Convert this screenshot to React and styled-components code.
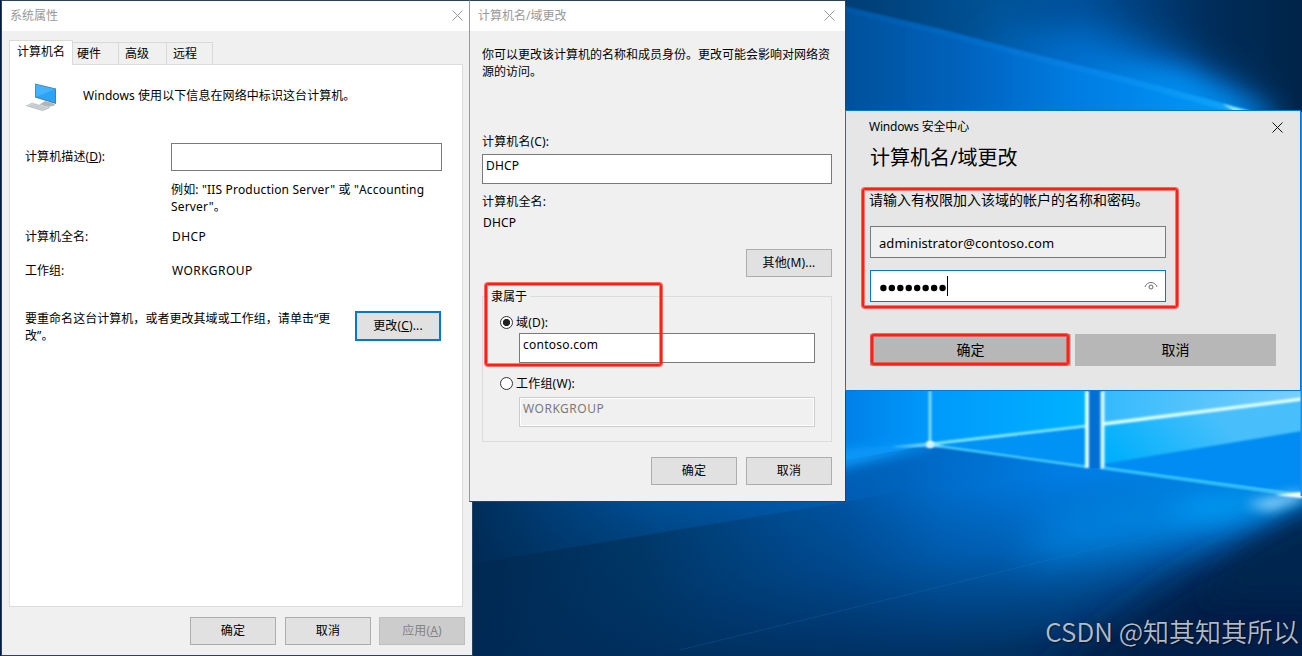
import React, { useState } from 'react';
import styled, { createGlobalStyle } from 'styled-components';

const GlobalStyle = createGlobalStyle`
  body {
    margin: 0;
    overflow: hidden;
  }
  * {
    box-sizing: border-box;
  }
`;

let Desktop = styled.div`
  position: relative;
  width: 1302px;
  height: 656px;
  overflow: hidden;
  background: #00264f;
  font-family: 'Noto Sans', 'Noto Sans CJK SC', sans-serif;
  font-size: 12px;
  line-height: 17px;
  color: #000;
  white-space: nowrap;
`;

let WallpaperSvg = styled.svg`
  display: block;
`;

// windows

let Window = styled.section`
  position: absolute;
  top: 0;
  left: ${props => props.$x}px;
  width: ${props => props.$w}px;
  height: ${props => props.$h}px;
  display: flex;
  flex-direction: column;
  background: #f0f0f0;
  border: 1px solid #2b4160;
  border-left-color: ${props => props.$edge || '#2b4160'};
`;

let TitleBar = styled.header`
  display: flex;
  align-items: center;
  justify-content: space-between;
  height: 30px;
  flex: none;
  padding: 0 ${props => props.$right}px 1px 8px;
  background: #fff;
  color: #999;
`;

let Button = styled.button`
  width: 86px;
  height: ${props => (props.$primary ? 30 : 28)}px;
  flex: none;
  padding: 0 0 1px;
  font: inherit;
  letter-spacing: 0.15px;
  color: #000;
  background: #e1e1e1;
  border: ${props => (props.$primary ? '2px solid #0078d7' : '1px solid #adadad')};
  border-radius: 0;

  &:disabled {
    margin-left: -1px;
    color: #838383;
    background: #ccc;
    border-color: #bfbfbf;
  }
`;

let Input = styled.input`
  display: block;
  width: ${props => props.$w}px;
  height: ${props => props.$h || 30}px;
  padding: 0 3px 7px;
  font: inherit;
  letter-spacing: ${props => props.$spacing || 0}px;
  color: #000;
  background: #fff;
  border: 1px solid #7a7a7a;
  border-radius: 0;
  outline: none;

  &:disabled {
    color: #7a7a7a;
    background: #f0f0f0;
    border-color: #ccc;
    box-shadow: inset 0 0 0 1px #fff;
  }
`;

// system properties

let Body = styled.div`
  padding: 9px 7px 0;
`;

let Tabs = styled.nav`
  display: flex;
  align-items: flex-end;
  height: 24px;
`;

let Tab = styled.div`
  position: relative;
  width: ${props => props.$w}px;
  height: ${props => (props.$active ? 25 : 22)}px;
  padding: ${props => (props.$active ? '2px 0 0 7px' : '2px 0 0 4px')};
  margin-bottom: ${props => (props.$active ? -1 : 0)}px;
  background: ${props => (props.$active ? '#fff' : '#f0f0f0')};
  border: 1px solid #d9d9d9;
  border-bottom: 0;
  border-left-width: ${props => (props.$active ? 1 : 0)}px;
  z-index: ${props => (props.$active ? 1 : 0)};

  & + & + & {
    padding-left: 6px;
  }
`;

let Pane = styled.div`
  width: 454px;
  height: 543px;
  padding: 17px 0 0 15px;
  background: #fff;
  border: 1px solid #dcdcdc;
`;

let Intro = styled.div`
  display: flex;
  align-items: flex-start;
  gap: 26px;
  height: 30px;

  p {
    margin: 5px 0 0;
    letter-spacing: 0.08px;
  }
`;

let Field = styled.div`
  display: grid;
  grid-template-columns: ${props => props.$label || 146}px 1fr;
  align-items: center;
  margin-top: ${props => props.$top}px;
`;

let FieldLabel = styled.span`
  padding-bottom: 2px;
  letter-spacing: 0.1px;
`;

let Value = styled.span`
  letter-spacing: 0.45px;
`;

let Hint = styled.p`
  margin: 10px 0 13px 146px;
  letter-spacing: 0.17px;
`;

let Rename = styled.div`
  display: flex;
  justify-content: space-between;
  align-items: flex-start;
  width: 416px;
  margin-top: 31px;

  p {
    margin: 0;
    letter-spacing: 0.04px;
  }
  button {
    margin-top: 1px;
  }
`;

let Footer = styled.footer`
  display: flex;
  gap: ${props => props.$gap || 9}px;
  margin-top: ${props => props.$top}px;
  padding-left: ${props => props.$left}px;
`;

// name change

let NameBody = styled.div`
  padding: 15px 13px 0 12px;

  p {
    margin: 0;
  }
`;

let Label = styled.p`
  && {
    margin-top: ${props => props.$top}px;
    margin-bottom: ${props => props.$bottom || 0}px;
    padding-left: ${props => props.$indent || 0}px;
    letter-spacing: 0.15px;
  }
`;

let Group = styled.fieldset`
  height: 154px;
  margin: 11px 0 0;
  padding: 0;
  min-width: 0;
  border: 1px solid #dcdcdc;

  legend {
    margin-left: 5px;
    padding: 0 3px;
  }
`;

let Option = styled.label`
  display: flex;
  align-items: center;
  gap: 3px;
  margin: ${props => props.$top}px 0 ${props => props.$bottom}px 17px;
  letter-spacing: 0.2px;
`;

let Radio = styled.span`
  width: 13px;
  height: 13px;
  border: 1px solid #333;
  border-radius: 50%;
  background: ${props => (props.$on ? 'radial-gradient(circle, #222 3.2px, #fff 4px)' : '#fff')};
`;

let Indent = styled.div`
  padding-left: 36px;
`;

// credential prompt

let Prompt = styled.section`
  position: absolute;
  left: 845px;
  top: 110px;
  width: 456px;
  height: 281px;
  padding: 7px 24px 0;
  background: #e6e6e6;
  border: 1px solid #0078d7;

  h1 {
    margin: 9px 0 0;
    font-size: 20px;
    line-height: 28px;
    font-weight: 400;
  }

  p {
    margin: 18px 0 16px;
    font-size: 14px;
    line-height: 20px;
    text-indent: -1px;
  }
`;

let PromptTop = styled.div`
  display: flex;
  align-items: center;
  justify-content: space-between;
  padding-right: 17px;
  margin: 0 -24px 0 -1px;
  letter-spacing: -0.2px;

  svg {
    margin-top: 1px;
  }
`;

let PromptField = styled.div`
  display: flex;
  align-items: center;
  width: 296px;
  height: 32px;
  margin-bottom: 12px;
  padding: ${props => (props.$focus ? '2px 7px 0 8px' : '3px 8px 0')};
  font-size: 13px;
  letter-spacing: 0.06px;
  background: ${props => (props.$focus ? '#fff' : '#f0f0f0')};
  border: 1px solid ${props => (props.$focus ? '#0078d7' : '#7a7a7a')};

  svg:last-child {
    margin: -3px 0 0 auto;
  }
`;

let PromptButtons = styled.div`
  display: flex;
  gap: 4px;
  margin-top: 32px;
`;

let PromptButton = styled.button`
  width: 201px;
  height: 32px;
  padding: 0 0 2px;
  font: inherit;
  font-size: 14px;
  color: #000;
  background: #b7b7b7;
  border: 0;
`;

let Caret = styled.span`
  width: 1px;
  height: 20px;
  margin: -3px 0 0 -1px;
  background: #000;
`;

// red frames drawn over the windows
let Mark = styled.div`
  position: absolute;
  left: ${props => props.$x}px;
  top: ${props => props.$y}px;
  width: ${props => props.$w}px;
  height: ${props => props.$h}px;
  border: 2px solid #ff2015;
  border-radius: 3px;
  box-shadow: 0 0 0 1px rgba(255, 32, 21, 0.65), inset 0 0 0 1px rgba(255, 32, 21, 0.55);
  pointer-events: none;
`;

let Watermark = styled.div`
  position: absolute;
  right: 3px;
  bottom: 7px;
  font-family: 'Noto Sans CJK SC', sans-serif;
  font-size: 26px;
  font-weight: 350;
  line-height: 36px;
  color: rgba(212, 217, 224, 0.85);
  text-shadow: 1px 1px 1px rgba(0, 0, 0, 0.5);
`;

function Close(props) {
  return (
    <svg width="11" height="11" viewBox="0 0 11 11">
      <path d="M.5 .5 L10.5 10.5 M10.5 .5 L.5 10.5" stroke={props.color} fill="none" />
    </svg>
  );
}

function ComputerIcon() {
  return (
    <svg width="32" height="30" viewBox="0 0 32 30">
      <path d="M20 19 L27 21 L30 22.5 L29.500 23.500 L23 25 L14.500 22.500 Z" fill="#aeb6bb" />
      <path d="M10 1.500 L31 6.500 L31 22 L10 15.500 Z" fill="#4b7f9f" />
      <path d="M10.700 2.400 L30 7.200 L30 20.600 L10.700 14.800 Z" fill="#2ba3f7" />
      <path d="M10.700 2.400 L30 7.200 L11 14.800 Z" fill="#45b2fa" />
      <path d="M1 23.500 L7 20.500 L25 25.500 L17.500 28.600 Z" fill="#d3d8db" />
      <path d="M1 23.500 L17.500 28.600 L25 25.500" fill="none" stroke="#a3abb0" strokeWidth=".7" />
      <path d="M4 22.500 L20 27.400 M6 21.400 L22.500 26.400 M6 24.800 L12 22 M10 26 L16 23.200 M14 27.400 L20 24.400" fill="none" stroke="#b4bbbf" strokeWidth=".5" />
    </svg>
  );
}

function Eye() {
  return (
    <svg width="14" height="12" viewBox="0 0 14 12">
      <path d="M1 7 C2.5 1 11.5 1 13 7" fill="none" stroke="#777" />
      <circle cx="7" cy="7" r="2" fill="none" stroke="#666" />
    </svg>
  );
}

function Dots(props) {
  return (
    <svg width="69" height="10" viewBox="0 0 69 10">
      {Array.from({ length: props.count }, (_, i) => (
        <circle key={i} cx={4.4 + i * 8.45} cy="6" r="3.2" />
      ))}
    </svg>
  );
}

function Wallpaper() {
  return (
    <WallpaperSvg width="1302" height="656" viewBox="0 0 1302 656">
      <defs>
        <filter id="b1" x="-10%" y="-10%" width="120%" height="120%" filterUnits="userSpaceOnUse" primitiveUnits="userSpaceOnUse"><feGaussianBlur stdDeviation="0.8" /></filter>
        <filter id="b5" x="-20%" y="-60%" width="140%" height="220%"><feGaussianBlur stdDeviation="6" /></filter>
        <filter id="b12" x="-30%" y="-100%" width="160%" height="300%"><feGaussianBlur stdDeviation="12" /></filter>
        <filter id="b20" x="-40%" y="-60%" width="180%" height="220%"><feGaussianBlur stdDeviation="20" /></filter>
        <linearGradient id="top" gradientUnits="userSpaceOnUse" x1="845" y1="0" x2="1302" y2="0">
          <stop offset="0" stopColor="#003d74" />
          <stop offset=".35" stopColor="#005499" />
          <stop offset=".52" stopColor="#004e98" />
          <stop offset=".8" stopColor="#002d5a" />
          <stop offset="1" stopColor="#002449" />
        </linearGradient>
        <linearGradient id="beam" gradientUnits="userSpaceOnUse" x1="845" y1="0" x2="1250" y2="0">
          <stop offset="0" stopColor="#00509a" />
          <stop offset=".3" stopColor="#0063be" />
          <stop offset=".55" stopColor="#007be0" />
          <stop offset="1" stopColor="#009cff" />
        </linearGradient>
        <linearGradient id="edge" gradientUnits="userSpaceOnUse" x1="845" y1="0" x2="1250" y2="0">
          <stop offset="0" stopColor="#005cae" />
          <stop offset=".6" stopColor="#0a88ee" />
          <stop offset="1" stopColor="#1ab8ff" />
        </linearGradient>
        <linearGradient id="floor" gradientUnits="userSpaceOnUse" x1="472" y1="0" x2="1302" y2="0">
          <stop offset="0" stopColor="#002850" />
          <stop offset=".2" stopColor="#003868" />
          <stop offset=".45" stopColor="#0054a2" />
          <stop offset=".57" stopColor="#006cca" />
          <stop offset=".7" stopColor="#007ce2" />
          <stop offset="1" stopColor="#0086ec" />
        </linearGradient>
        <linearGradient id="shade" gradientUnits="userSpaceOnUse" x1="980" y1="485" x2="1000" y2="650">
          <stop offset="0" stopColor="#002a58" stopOpacity="0" />
          <stop offset=".4" stopColor="#002a58" stopOpacity=".28" />
          <stop offset=".75" stopColor="#002a58" stopOpacity=".66" />
          <stop offset="1" stopColor="#00264f" stopOpacity=".85" />
        </linearGradient>
        <linearGradient id="pane1" gradientUnits="userSpaceOnUse" x1="845" y1="0" x2="1087" y2="0">
          <stop offset="0" stopColor="#0080ea" />
          <stop offset=".35" stopColor="#0099fb" />
          <stop offset="1" stopColor="#00b2ff" />
        </linearGradient>
        <linearGradient id="pane2" gradientUnits="userSpaceOnUse" x1="1120" y1="465" x2="1200" y2="395">
          <stop offset="0" stopColor="#00b0fc" />
          <stop offset="1" stopColor="#48bffb" />
        </linearGradient>
        <linearGradient id="pane3" gradientUnits="userSpaceOnUse" x1="1103" y1="0" x2="1302" y2="0">
          <stop offset="0" stopColor="#34bafd" />
          <stop offset="1" stopColor="#7acffb" />
        </linearGradient>
        <linearGradient id="left" gradientUnits="userSpaceOnUse" x1="472" y1="0" x2="1000" y2="0">
          <stop offset="0" stopColor="#002d58" />
          <stop offset=".35" stopColor="#00529c" />
          <stop offset=".7" stopColor="#0064c0" />
          <stop offset="1" stopColor="#0070d2" stopOpacity="0" />
        </linearGradient>
        <linearGradient id="leftFade" gradientUnits="userSpaceOnUse" x1="700" y1="480" x2="712" y2="545">
          <stop offset="0" stopColor="#fff" />
          <stop offset="1" stopColor="#fff" stopOpacity=".3" />
        </linearGradient>
        <mask id="leftMask" maskUnits="userSpaceOnUse" x="470" y="430" width="600" height="170">
          <rect x="470" y="430" width="600" height="170" fill="url(#leftFade)" />
        </mask>
      </defs>

      {/* sky over the window */}
      <rect x="845" y="0" width="457" height="112" fill="url(#top)" />
      <path d="M980 50 L1090 30 L1180 60 L1270 112 L1180 125 Z" fill="#0074d6" filter="url(#b20)" />
      <path d="M1080 70 L1180 72 L1285 116 L1230 125 Z" fill="#0094f8" opacity=".85" filter="url(#b12)" />
      <path d="M845 7 L940 29 L1030 53 L1140 80 L1250 111 L845 111 Z" fill="url(#beam)" filter="url(#b1)" />
      <path d="M845 9 L940 32 L1030 56 L1140 84 L1250 114" fill="none" stroke="url(#edge)" strokeWidth="6" opacity=".5" filter="url(#b1)" />
      <path d="M1222 104 L1252 112 L1236 112 Z" fill="#a8ecff" filter="url(#b1)" />

      {/* floor */}
      <rect x="470" y="391" width="832" height="265" fill="url(#floor)" />
      <rect x="470" y="465" width="832" height="191" fill="url(#shade)" />
      <path d="M472 564 L845 502 L1000 474 L1000 440 L472 440 Z" fill="url(#left)" mask="url(#leftMask)" />
      <path d="M1345 492 L1270 530 L1180 575 L1020 690 L1345 700 Z" fill="#001e44" opacity=".92" filter="url(#b20)" />
      <path d="M1320 490 L1302 506 L1215 528 L1020 560 L1060 520 L1200 488 Z" fill="#0098f8" opacity=".65" filter="url(#b20)" />
      <path d="M1310 490 L1300 502 L1230 518 L1160 520 L1200 500 Z" fill="#00a8ff" opacity=".7" filter="url(#b12)" />
      <path d="M1345 500 L1290 521 L1240 552 L1200 600 L1345 600 Z" fill="#00284f" opacity=".85" filter="url(#b12)" />
      <path d="M680 650 L1160 533" stroke="#2c86cc" strokeWidth="1" opacity=".2" />

      {/* glass */}
      <path d="M845 391 H1088 V467 L930 445 L845 460 Z" fill="url(#pane1)" />
      <path d="M930 445 L1088 426 V467 Z" fill="#0092f4" />
      <path d="M825 450 L930 443 L932 447 L825 472 Z" fill="#0a9cfc" opacity=".9" filter="url(#b5)" />
      <rect x="1088" y="391" width="14" height="77" fill="#006fd6" />
      <path d="M1103 391 H1302 V495 L1103 468 Z" fill="url(#pane2)" />
      <path d="M1103 391 H1302 V399 L1103 424 Z" fill="url(#pane3)" />
      <path d="M1103 464 L1302 431 V494 L1103 467 Z" fill="#008cf2" filter="url(#b1)" />
      <g fill="none" stroke="#8cecff" filter="url(#b1)">
        <path d="M930 391 V445" strokeWidth="2.600" stroke="#8ce2ff" />
        <path d="M930 444 L1087 426" strokeWidth="2.600" />
        <path d="M930 445 L1088 467" strokeWidth="1.800" stroke="#5cdcff" />
        <path d="M1087 391 V468" strokeWidth="4" stroke="#d8fcff" />
        <path d="M1102.500 391 V469" strokeWidth="4" stroke="#d8fcff" />
        <path d="M1103 424 L1302 399" strokeWidth="3.500" stroke="#dcffff" />
        <path d="M1103 468 L1302 496" strokeWidth="2.500" stroke="#40ccff" />
      </g>
      <ellipse cx="930" cy="444.500" rx="4" ry="3.500" fill="#fff" filter="url(#b1)" />
      <path d="M890 447 L932 442 L945 446 L932 447 Z" fill="#b0ecff" filter="url(#b1)" opacity=".6" />
      <path d="M1245 504 L1302 492 V499 L1270 510 Z" fill="#9adcff" filter="url(#b5)" />
      <path d="M1275 495 L1302 492 V498 Z" fill="#fff" filter="url(#b1)" />
      <rect x="1300.500" y="112" width="1.500" height="384" fill="#1a90ea" />
      <rect x="0" y="0" width="2" height="656" fill="#001c40" />
    </WallpaperSvg>
  );
}

function SystemProperties() {
  let [tab, setTab] = useState(0);
  let tabs = [
    { name: '计算机名', w: 64 },
    { name: '硬件', w: 46 },
    { name: '高级', w: 48 },
    { name: '远程', w: 46 },
  ];

  return (
    <Window $x={1} $w={472} $h={656}>
      <TitleBar $right={9}>
        <span>系统属性</span>
        <Close color="#999" />
      </TitleBar>
      <Body>
        <Tabs>
          {tabs.map((t, i) => (
            <Tab key={t.name} $w={t.w} $active={i === tab} onClick={() => setTab(i)}>{t.name}</Tab>
          ))}
        </Tabs>
        <Pane>
          <Intro>
            <ComputerIcon />
            <p>Windows 使用以下信息在网络中标识这台计算机。</p>
          </Intro>
          <Field $top={31}>
            <FieldLabel>计算机描述(<u>D</u>):</FieldLabel>
            <Input $w={271} $h={28} />
          </Field>
          <Hint>
            例如: "IIS Production Server" 或 "Accounting<br />
            Server"。
          </Hint>
          <Field $top={0} $label={147}>
            <span>计算机全名:</span>
            <Value>DHCP</Value>
          </Field>
          <Field $top={17} $label={147}>
            <span>工作组:</span>
            <Value>WORKGROUP</Value>
          </Field>
          <Rename>
            <p>
              要重命名这台计算机，或者更改其域或工作组，请单击“更<br />
              改”。
            </p>
            <Button $primary>更改(<u>C</u>)...</Button>
          </Rename>
        </Pane>
        <Footer $top={10} $left={181}>
          <Button>确定</Button>
          <Button>取消</Button>
          <Button disabled>应用(<u>A</u>)</Button>
        </Footer>
      </Body>
    </Window>
  );
}

function NameChange() {
  let [name, setName] = useState('DHCP');
  let [member, setMember] = useState('domain');
  let [domain, setDomain] = useState('contoso.com');

  return (
    <Window $x={469} $w={377} $h={502} $edge="#999">
      <TitleBar $right={10}>
        <span>计算机名/域更改</span>
        <Close color="#999" />
      </TitleBar>
      <NameBody>
        <p>
          你可以更改该计算机的名称和成员身份。更改可能会影响对网络资<br />
          源的访问。
        </p>
        <Label $top={53} $bottom={4}>计算机名(C):</Label>
        <Input $w={350} $spacing={0.2} value={name} onChange={(e) => { setName(e.target.value) }} />
        <Label $top={9} $bottom={4}>计算机全名:</Label>
        <Label $top={0} $indent={1}>{name}</Label>
        <Footer $top={18} $left={264}>
          <Button>其他(M)...</Button>
        </Footer>
        <Group>
          <legend>隶属于</legend>
          <Option $top={9} $bottom={2} onClick={() => setMember('domain')}>
            <Radio $on={member === 'domain'} />
            域(D):
          </Option>
          <Indent>
            <Input $w={296} $spacing={0.25} value={domain} onChange={(e) => { setDomain(e.target.value) }} />
          </Indent>
          <Option $top={12} $bottom={5} onClick={() => setMember('workgroup')}>
            <Radio $on={member === 'workgroup'} />
            工作组(W):
          </Option>
          <Indent>
            <Input $w={296} $spacing={0.5} defaultValue="WORKGROUP" disabled={member !== 'workgroup'} />
          </Indent>
        </Group>
        <Footer $top={15} $left={169}>
          <Button>确定</Button>
          <Button>取消</Button>
        </Footer>
      </NameBody>
    </Window>
  );
}

function SecurityPrompt() {
  return (
    <Prompt>
      <PromptTop>
        <span>Windows 安全中心</span>
        <Close color="#111" />
      </PromptTop>
      <h1>计算机名/域更改</h1>
      <p>请输入有权限加入该域的帐户的名称和密码。</p>
      <PromptField>administrator@contoso.com</PromptField>
      <PromptField $focus>
        <Dots count={8} />
        <Caret />
        <Eye />
      </PromptField>
      <PromptButtons>
        <PromptButton>确定</PromptButton>
        <PromptButton>取消</PromptButton>
      </PromptButtons>
    </Prompt>
  );
}

function App() {
  return (
    <Desktop>
      <GlobalStyle />
      <Wallpaper />
      <SystemProperties />
      <NameChange />
      <SecurityPrompt />
      <Mark $x={485} $y={283} $w={177} $h={83} />
      <Mark $x={862} $y={188} $w={316} $h={120} />
      <Mark $x={871} $y={334} $w={198} $h={31} />
      <Watermark>CSDN @知其知其所以</Watermark>
    </Desktop>
  );
}

export default App;
